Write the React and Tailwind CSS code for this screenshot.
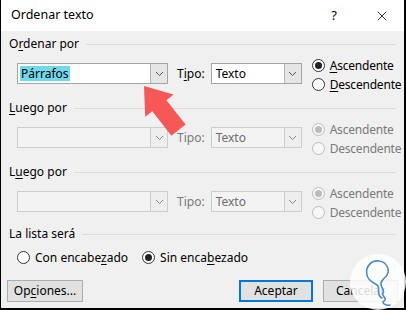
import { X } from "lucide-react";

const font = { fontFamily: '"Noto Sans", "Open Sans", sans-serif' };

function U({ children }) {
  return <span className="underline underline-offset-2">{children}</span>;
}

function Radio({ checked, disabled, children }) {
  const ring = disabled ? "border-[#bcbcbc] bg-[#f7f7f7]" : "border-[#333] bg-white";
  const dot = disabled ? "bg-[#bcbcbc]" : "bg-[#222]";
  return (
    <label className={`flex h-[19px] items-center gap-[5px] ${disabled ? "text-[#7a7a7a]" : "text-black"}`}>
      <span className={`grid h-[13px] w-[13px] place-items-center rounded-full border ${ring}`}>
        {checked && <span className={`h-[7px] w-[7px] rounded-full ${dot}`} />}
      </span>
      <span>{children}</span>
    </label>
  );
}

function Combo({ width, disabled, children }) {
  return (
    <div
      className={`flex h-[21px] border ${disabled ? "border-[#cccccc] bg-[#f3f3f3]" : "border-[#a5a5a5] bg-white"}`}
      style={{ width }}
    >
      <div className="flex min-w-0 flex-1 items-center pl-[2px]">{children}</div>
      <div className={`grid w-[17px] place-items-center border-l ${disabled ? "border-[#cccccc] bg-[#eeeeee]" : "border-[#b5b5b5] bg-[#e5e5e5]"}`}>
        <svg width="9" height="6" viewBox="0 0 9 6" fill="none">
          <path d="M1 1l3.5 3.5L8 1" stroke={disabled ? "#888" : "#555"} strokeWidth="1" />
        </svg>
      </div>
    </div>
  );
}

function Header({ children }) {
  return (
    <div className="flex h-4 items-center gap-[7px] pl-[8px] pr-[8px]">
      <span className="text-black">{children}</span>
      <span className="h-px flex-1 bg-[#dcdcdc]" />
    </div>
  );
}

function SortRow({ disabled, first, value }) {
  return (
    <div className="mt-1 flex h-[38px] items-start pl-4">
      <div className="mt-[7px]">
        <Combo width={151} disabled={disabled}>
          {value && <span className="bg-[#6fdaee] px-[1px] leading-[15px] text-black">{value}</span>}
        </Combo>
      </div>
      <span className={`ml-[9px] mt-[9px] ${disabled ? "text-[#7a7a7a]" : "text-black"}`}>
        {first ? <>T<U>i</U>po:</> : "Tipo:"}
      </span>
      <div className="ml-[6px] mt-[7px]">
        <Combo width={91} disabled={disabled}>
          <span className={`pl-[2px] ${disabled ? "text-[#6d6d6d]" : "text-black"}`}>Texto</span>
        </Combo>
      </div>
      <div className="ml-[10px] flex flex-col tracking-[-0.2px]">
        <Radio checked disabled={disabled}>{first ? <><U>A</U>scendente</> : "Ascendente"}</Radio>
        <Radio disabled={disabled}>{first ? <><U>D</U>escendente</> : "Descendente"}</Radio>
      </div>
    </div>
  );
}

export default function App() {
  return (
    <div className="relative h-[310px] w-[406px] overflow-hidden text-[12px]" style={font}>
      <div className="flex h-full flex-col border-b-2 border-l border-r-2 border-black bg-[#f0f0f0]">
        <div className="flex h-[31px] shrink-0 items-center bg-white pl-[10px]">
          <span className="flex-1 text-[12.5px] text-black">Ordenar texto</span>
          <span className="mr-[37px] text-[13px] text-black">?</span>
          <X size={16} strokeWidth={1.2} className="mr-[14px] text-black" />
        </div>

        <div className="mt-[5px]">
          <Header>O<U>r</U>denar por</Header>
          <SortRow first value="Párrafos" />
        </div>
        <div className="mt-[6px]">
          <Header><U>L</U>uego por</Header>
          <SortRow disabled />
        </div>
        <div className="mt-[6px]">
          <Header>L<U>u</U>ego por</Header>
          <SortRow disabled />
        </div>

        <div className="mt-[4px]">
          <Header>La lista será</Header>
          <div className="mt-[6px] flex items-center gap-[14px] pl-4">
            <Radio>Con encabe<U>z</U>ado</Radio>
            <Radio checked>Sin enca<U>b</U>ezado</Radio>
          </div>
        </div>

        <div className="mt-[13px] flex items-center pl-[6px] pr-[6px]">
          <button className="h-[22px] w-[76px] border border-[#adadad] bg-[#e1e1e1] text-black">
            Op<U>c</U>iones...
          </button>
          <div className="flex-1" />
          <button className="h-[22px] w-[74px] border-2 border-[#0078d7] bg-[#e1e1e1] text-black">Aceptar</button>
          <button className="ml-[10px] h-[22px] w-[75px] border border-[#adadad] bg-[#e1e1e1] text-black">Cancelar</button>
        </div>
      </div>

      <svg className="pointer-events-none absolute left-0 top-0" width="406" height="310">
        <g transform="translate(144 86) rotate(-38)">
          <path d="M0 0L18 25L9 25L9 56L-9 56L-9 25L-18 25Z" fill="#f65858" />
        </g>
        <circle cx="378" cy="282" r="28" fill="#ffffff" fillOpacity="0.85" />
        <path
          d="M382 298c-6-3-2-8 -4-12c-2-3-10-4-11-11c-2-8 4-15 12-14c8 1 11 9 8 14c-2 4-6 4-6 9c0 4 4 6 2 9c-2 3 5 5 1 8c-3 2 2 5 6 4"
          fill="none"
          stroke="#4b8cc6"
          strokeWidth="1.6"
          strokeLinecap="round"
        />
      </svg>
    </div>
  );
}
